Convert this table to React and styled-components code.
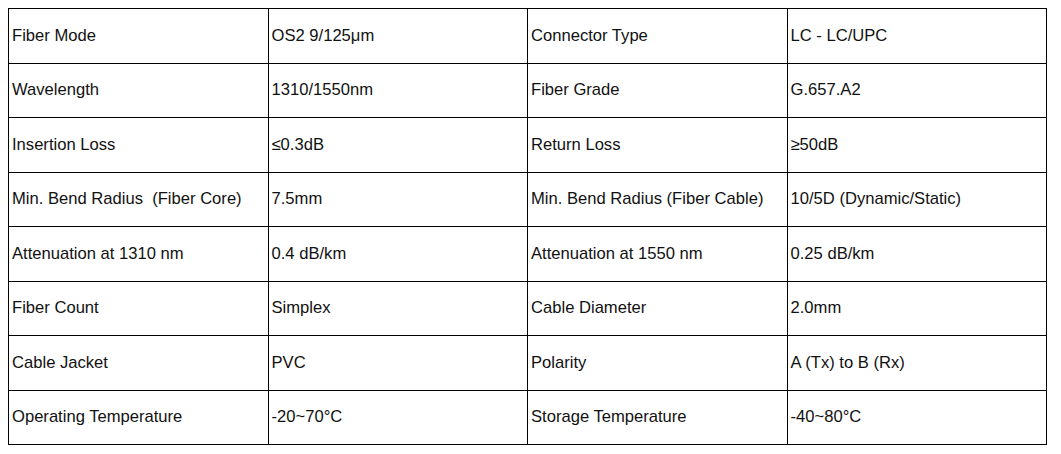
import React from "react";
import styled, { createGlobalStyle } from "styled-components";

const Global = createGlobalStyle`
  html, body { margin: 0; padding: 0; background: #fff; }
  body { padding: 8px; font-family: "Liberation Sans", Arial, sans-serif; }
`;

const Table = styled.table`
  border-collapse: collapse;
  width: 1039px;
  height: 437px;
  table-layout: fixed;
  font-family: "Liberation Sans", Arial, sans-serif;
  font-size: 16.6px;
  color: #111;
`;

const Cell = styled.td`
  border: 1px solid #000;
  padding: 0 3px;
  vertical-align: middle;
  white-space: pre;
  width: 25%;
`;

const rows = [
  ["Fiber Mode", "OS2 9/125μm", "Connector Type", "LC - LC/UPC"],
  ["Wavelength", "1310/1550nm", "Fiber Grade", "G.657.A2"],
  ["Insertion Loss", "≤0.3dB", "Return Loss", "≥50dB"],
  ["Min. Bend Radius  (Fiber Core)", "7.5mm", "Min. Bend Radius (Fiber Cable)", "10/5D (Dynamic/Static)"],
  ["Attenuation at 1310 nm", "0.4 dB/km", "Attenuation at 1550 nm", "0.25 dB/km"],
  ["Fiber Count", "Simplex", "Cable Diameter", "2.0mm"],
  ["Cable Jacket", "PVC", "Polarity", "A (Tx) to B (Rx)"],
  ["Operating Temperature", "-20~70°C", "Storage Temperature", "-40~80°C"],
];

export default function App() {
  return (
    <>
      <Global />
      <Table>
        <tbody>
          {rows.map((r, i) => (
            <tr key={i}>
              {r.map((c, j) => (
                <Cell key={j}>{c}</Cell>
              ))}
            </tr>
          ))}
        </tbody>
      </Table>
    </>
  );
}
